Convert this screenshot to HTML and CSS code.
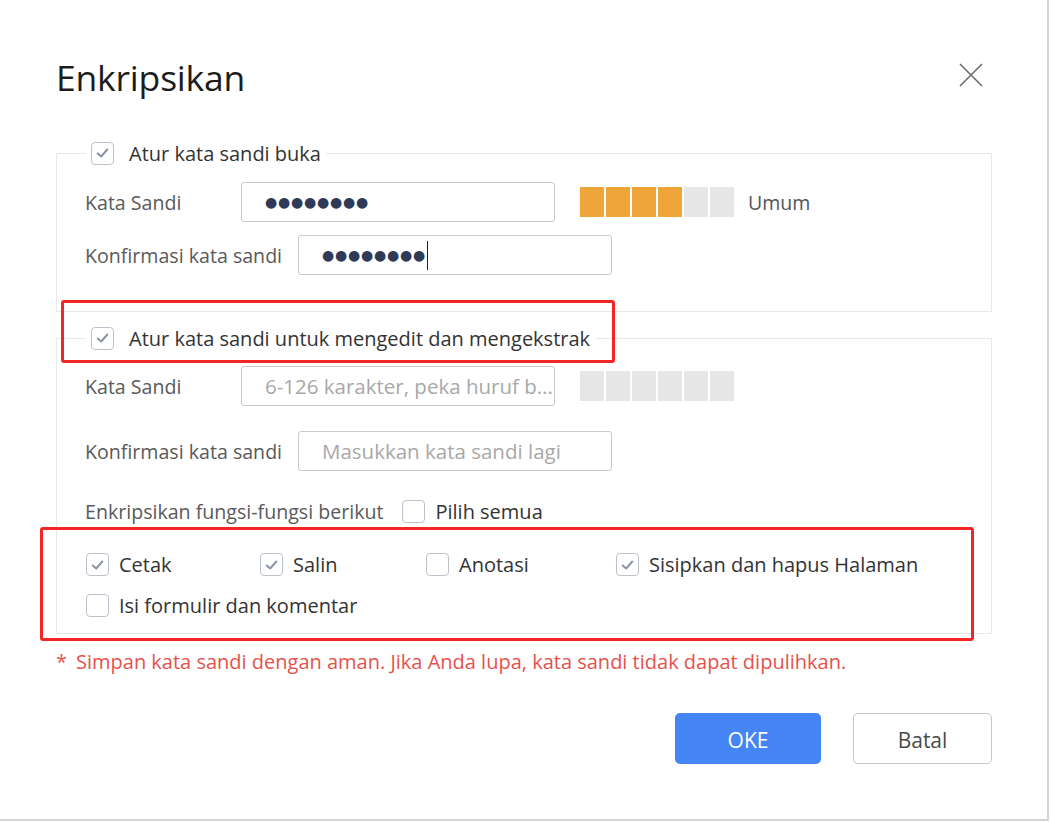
FILE: index.html
```html
<!DOCTYPE html>
<html lang="id">
<head>
<meta charset="utf-8">
<title>Enkripsikan</title>
<link rel="stylesheet" href="styles.css">
</head>
<body>
<div class="dialog">
  <div class="header">
    <h1 class="title">Enkripsikan</h1>
    <button class="close" aria-label="Tutup">
      <svg width="26" height="26" viewBox="0 0 26 26"><path d="M2 2 L24 24 M24 2 L2 24" stroke="#6b6b6b" stroke-width="1.6" fill="none"/></svg>
    </button>
  </div>

  <fieldset class="group group-open">
    <legend class="legend">
      <span class="cb checked"><svg viewBox="0 0 24 24"><path d="M6.5 12.5 L10.5 16 L17.5 8" stroke="#8a93a6" stroke-width="2.2" fill="none" stroke-linecap="round" stroke-linejoin="round"/></svg></span>
      <span class="cb-text">Atur kata sandi buka</span>
    </legend>
    <div class="row row-first">
      <span class="label label-pw">Kata Sandi</span>
      <div class="input"><span class="dots">●●●●●●●●</span></div>
      <div class="strength">
        <span class="seg on"></span><span class="seg on"></span><span class="seg on"></span><span class="seg on"></span><span class="seg"></span><span class="seg"></span>
      </div>
      <span class="strength-text">Umum</span>
    </div>
    <div class="row row-second">
      <span class="label label-confirm">Konfirmasi kata sandi</span>
      <div class="input"><span class="dots">●●●●●●●●</span><span class="caret"></span></div>
    </div>
  </fieldset>

  <fieldset class="group group-edit">
    <legend class="legend">
      <span class="cb checked"><svg viewBox="0 0 24 24"><path d="M6.5 12.5 L10.5 16 L17.5 8" stroke="#8a93a6" stroke-width="2.2" fill="none" stroke-linecap="round" stroke-linejoin="round"/></svg></span>
      <span class="cb-text">Atur kata sandi untuk mengedit dan mengekstrak</span>
    </legend>
    <div class="row row-first">
      <span class="label label-pw">Kata Sandi</span>
      <div class="input"><span class="placeholder">6-126 karakter, peka huruf b...</span></div>
      <div class="strength">
        <span class="seg"></span><span class="seg"></span><span class="seg"></span><span class="seg"></span><span class="seg"></span><span class="seg"></span>
      </div>
    </div>
    <div class="row row-second row-loose">
      <span class="label label-confirm">Konfirmasi kata sandi</span>
      <div class="input"><span class="placeholder">Masukkan kata sandi lagi</span></div>
    </div>
    <div class="row row-functions">
      <span class="label">Enkripsikan fungsi-fungsi berikut</span>
      <span class="check-item select-all"><span class="cb"></span><span class="cb-text">Pilih semua</span></span>
    </div>
    <div class="perm-grid">
      <span class="check-item"><span class="cb checked"><svg viewBox="0 0 24 24"><path d="M6.5 12.5 L10.5 16 L17.5 8" stroke="#8a93a6" stroke-width="2.2" fill="none" stroke-linecap="round" stroke-linejoin="round"/></svg></span><span class="cb-text">Cetak</span></span>
      <span class="check-item"><span class="cb checked"><svg viewBox="0 0 24 24"><path d="M6.5 12.5 L10.5 16 L17.5 8" stroke="#8a93a6" stroke-width="2.2" fill="none" stroke-linecap="round" stroke-linejoin="round"/></svg></span><span class="cb-text">Salin</span></span>
      <span class="check-item"><span class="cb"></span><span class="cb-text">Anotasi</span></span>
      <span class="check-item"><span class="cb checked"><svg viewBox="0 0 24 24"><path d="M6.5 12.5 L10.5 16 L17.5 8" stroke="#8a93a6" stroke-width="2.2" fill="none" stroke-linecap="round" stroke-linejoin="round"/></svg></span><span class="cb-text">Sisipkan dan hapus Halaman</span></span>
      <span class="check-item"><span class="cb"></span><span class="cb-text">Isi formulir dan komentar</span></span>
    </div>
  </fieldset>

  <p class="warning"><span class="star">*</span>Simpan kata sandi dengan aman. Jika Anda lupa, kata sandi tidak dapat dipulihkan.</p>

  <div class="footer">
    <button class="btn btn-primary">OKE</button>
    <button class="btn btn-default">Batal</button>
  </div>

  <div class="mark mark-1"></div>
  <div class="mark mark-2"></div>
</div>
</body>
</html>
```

FILE: styles.css
```css
* { box-sizing: border-box; }
html, body { margin: 0; padding: 0; background: #ffffff; }
body {
  font-family: "Open Sans", "Noto Sans", "Liberation Sans", sans-serif;
  color: #333;
}
.dialog {
  position: relative;
  width: 1049px;
  height: 821px;
  background: #fff;
  border-right: 2px solid #d4d4d4;
  border-bottom: 2px solid #d4d4d4;
  padding: 0 55px 0 56px;
}
.header {
  display: flex;
  justify-content: space-between;
  align-items: flex-start;
  height: 141px;
  padding-top: 53px;
}
.title {
  margin: 0;
  font-weight: 400;
  font-size: 35.5px;
  line-height: 48px;
  color: #1c1c1c;
  letter-spacing: -0.2px;
}
.close {
  border: 0;
  background: none;
  padding: 0;
  margin-right: 8px;
  margin-top: 9px;
  width: 26px;
  height: 26px;
}
.group {
  margin: 0;
  border: 1px solid #e9e9e9;
  padding: 0 28px;
  min-width: 0;
}
.group-open { padding-bottom: 36px; }
.group-edit { margin-top: 14px; padding-bottom: 14px; }
.legend {
  padding: 0 5px;
  margin-left: 1px;
  display: flex;
  align-items: center;
  gap: 15px;
  height: 24px;
}
.cb {
  width: 23px;
  height: 23px;
  border: 1.5px solid #bcc1cc;
  border-radius: 4px;
  background: #fff;
  display: inline-flex;
  align-items: center;
  justify-content: center;
  flex: none;
}
.cb svg { width: 22px; height: 22px; }
.cb-text {
  font-size: 20px;
  color: #333;
  white-space: nowrap;
}
.row {
  display: flex;
  align-items: center;
  height: 40px;
}
.row-first { margin-top: 17px; }
.group-edit .row-first { margin-top: 16px; }
.row-second { margin-top: 13px; }
.row-second.row-loose { margin-top: 25px; }
.row-functions { margin-top: 28px; height: 24px; }
.label {
  font-size: 19.6px;
  color: #5a5a5a;
  flex: none;
  white-space: nowrap;
}
.label-pw { width: 156px; }
.label-confirm { width: 213px; }
.input {
  width: 314px;
  height: 40px;
  border: 1px solid #c9c9c9;
  border-radius: 3px;
  padding: 0 0 0 23px;
  display: flex;
  align-items: center;
  flex: none;
}
.dots {
  font-family: "DejaVu Sans", sans-serif;
  font-size: 14px;
  color: #2e3a57;
  letter-spacing: 0.8px;
  line-height: 1;
}
.caret {
  width: 1px;
  height: 29px;
  background: #222;
  margin-left: 1px;
}
.placeholder {
  font-size: 20.5px;
  color: #a8a8a8;
  white-space: nowrap;
}
.strength {
  display: flex;
  gap: 2px;
  margin-left: 25px;
}
.seg {
  width: 24px;
  height: 30px;
  background: #e6e6e6;
}
.seg.on { background: #f0a53a; }
.strength-text {
  margin-left: 14px;
  font-size: 19.5px;
  color: #555;
}
.check-item {
  display: inline-flex;
  align-items: center;
  gap: 10px;
}
.select-all { margin-left: 19px; }
.perm-grid {
  display: grid;
  grid-template-columns: 174px 166px 190px auto;
  row-gap: 14px;
  margin-top: 28px;
  margin-left: 1px;
}
.warning {
  margin: 14px 0 0 0;
  font-size: 20px;
  line-height: 28px;
  color: #e5524d;
}
.star { margin-right: 9px; }
.footer {
  display: flex;
  justify-content: flex-end;
  gap: 32px;
  margin-top: 37px;
}
.btn {
  height: 51px;
  border-radius: 5px;
  font-family: inherit;
  font-size: 21px;
  padding-top: 3px;
}
.btn-primary {
  width: 146px;
  background: #4585f5;
  border: 0;
  color: #fff;
}
.btn-default {
  width: 139px;
  background: #fff;
  border: 1px solid #c4c4c4;
  color: #4a4a4a;
}
.mark {
  position: absolute;
  border: 3px solid #f32626;
  border-radius: 3px;
  pointer-events: none;
}
.mark-1 { left: 61px; top: 300px; width: 554px; height: 63px; }
.mark-2 { left: 40px; top: 527px; width: 934px; height: 114px; }
```
